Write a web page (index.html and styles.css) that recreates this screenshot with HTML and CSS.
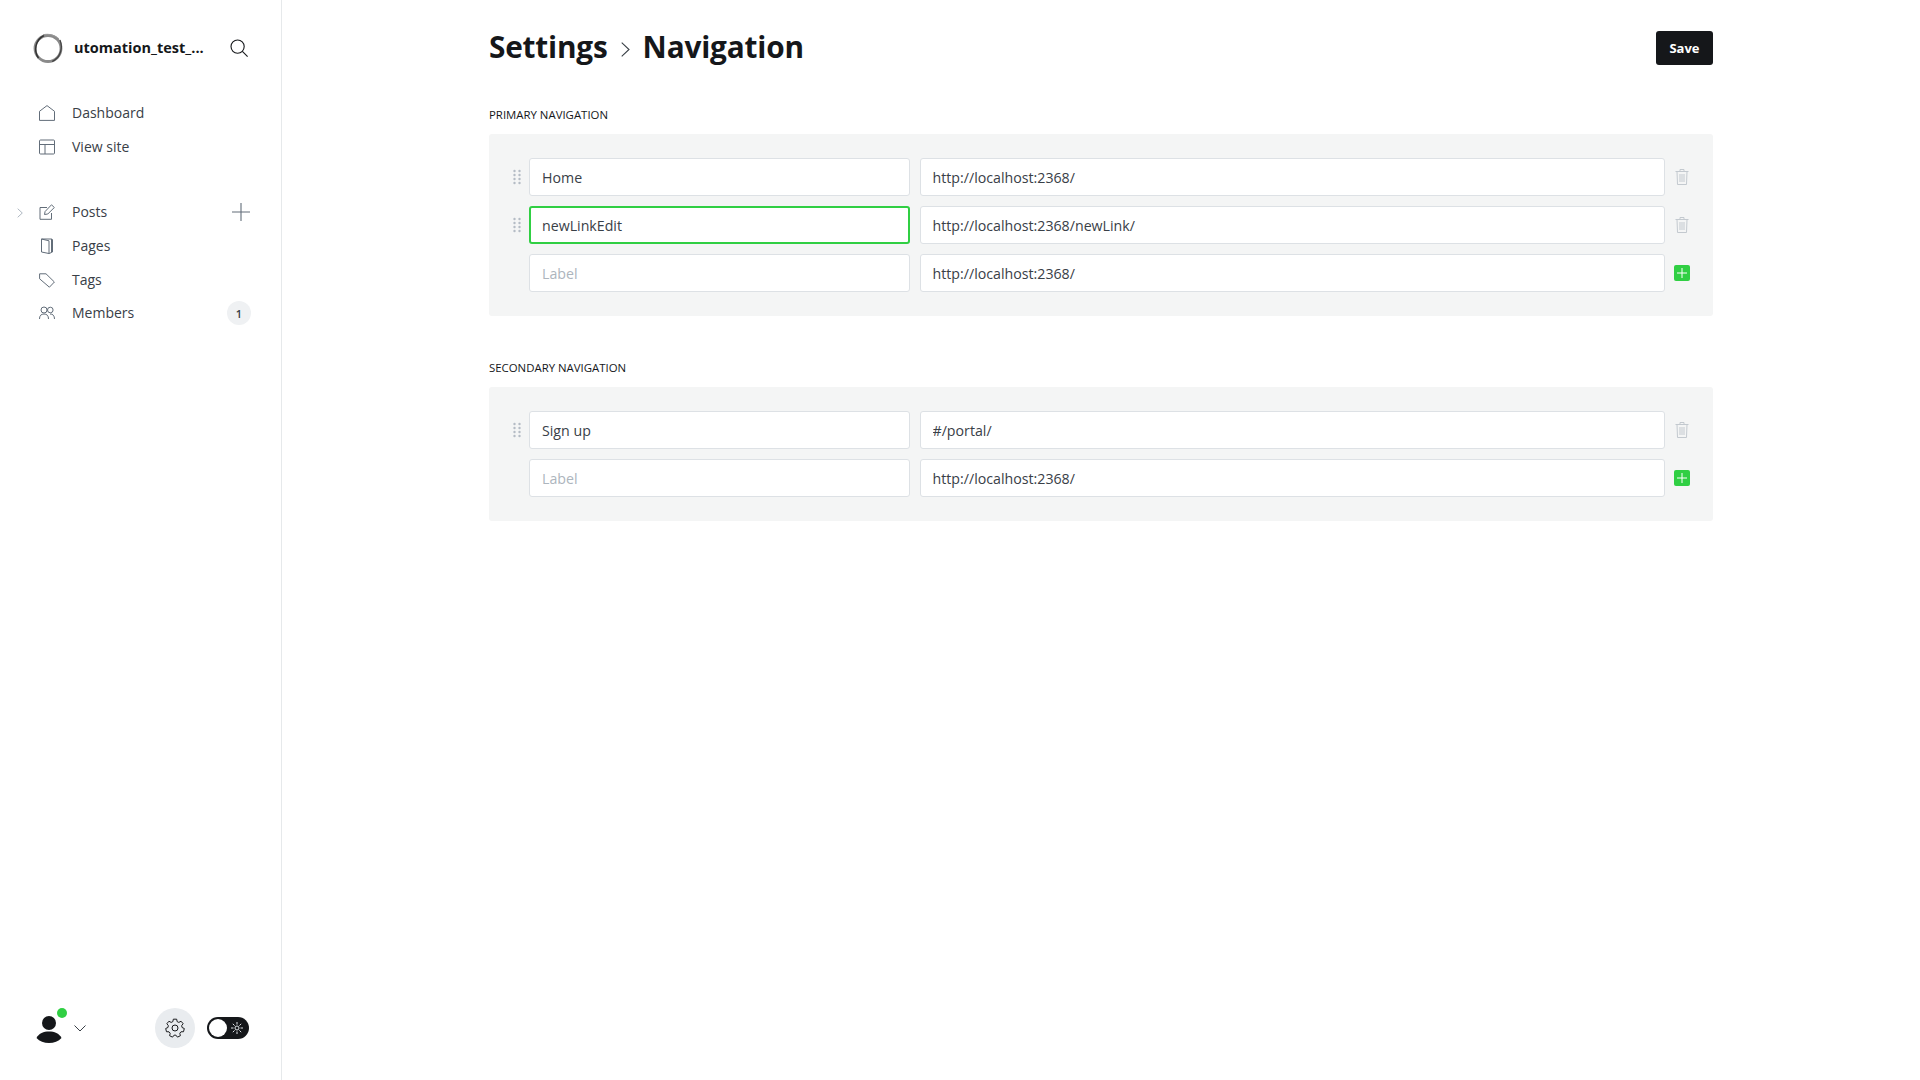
FILE: index.html
```html
<!DOCTYPE html>
<html lang="en">
<head>
<meta charset="utf-8">
<title>Settings - Navigation</title>
<link rel="stylesheet" href="styles.css">
</head>
<body>
<div class="app">
  <aside class="sidebar">
    <div class="brand">
      <svg class="logo" viewBox="0 0 30 30" width="30" height="30"><circle cx="15" cy="15.500" r="13" fill="none" stroke="#8a8a8a" stroke-width="2.800"/><path d="M5.500 25C.5 18 2 7 11 2.500" fill="none" stroke="#333" stroke-width="1.500"/><path d="M27 7c3 7 1 18-8 21.500" fill="none" stroke="#444" stroke-width="1.300"/><path d="M10 1.800c6-1.500 12 .5 16 4" fill="none" stroke="#999" stroke-width="1"/></svg>
      <span class="brand-name">utomation_test_...</span>
      <svg class="search" viewBox="0 0 18 18" width="18" height="18"><circle cx="7.600" cy="7.600" r="6.600"/><path d="M12.400 12.400 17.600 17.600"/></svg>
    </div>
    <nav class="nav nav-top">
      <a class="nav-item"><svg class="ico" viewBox="0 0 16 16"><path d="M.5 6.300 8 .6l7.500 5.700v9.100H.5z"/></svg><span>Dashboard</span></a>
      <a class="nav-item"><svg class="ico" viewBox="0 0 16 16"><rect x=".5" y="1" width="15" height="14" rx="1"/><path d="M.5 5.500h15M6 5.500V15"/></svg><span>View site</span></a>
    </nav>
    <nav class="nav nav-content">
      <a class="nav-item">
        <svg class="caret" viewBox="0 0 6 10" width="6" height="10"><path d="M.7.700 5.300 5 .7 9.300"/></svg>
        <svg class="ico" viewBox="0 0 16 16"><path d="M8 3.500H1v11.800h11.500V9"/><path d="M5.500 10.500l.6-3L12.500.8 15.300 3.500 8.800 10z"/></svg><span>Posts</span>
        <svg class="plus" viewBox="0 0 18 18" width="18" height="18"><path d="M9 0v18M0 9h18"/></svg>
      </a>
      <a class="nav-item"><svg class="ico" viewBox="0 0 16 16"><path d="M2.500 1h10v13.500l-2.500 1-7.500-1.500zM2.500 1 10 2.800v12.700M12.500 1l1 .5v12.500l-1 .5"/></svg><span>Pages</span></a>
      <a class="nav-item"><svg class="ico" viewBox="0 0 16 16"><path d="M.6 1.800h6.400L15.400 10l-5 5.200L.6 6.800z"/></svg><span>Tags</span></a>
      <a class="nav-item"><svg class="ico" viewBox="0 0 16 16"><circle cx="5" cy="5" r="3"/><circle cx="11.300" cy="5" r="2.800"/><path d="M.5 14c0-3.500 1.700-5 4.500-5s4.500 1.500 4.500 5M11 9c2.800-.3 4.500 1.800 4.500 5"/></svg><span>Members</span><b class="badge">1</b></a>
    </nav>
    <div class="side-foot">
      <div class="avatar">
        <svg viewBox="0 0 34 34" width="34" height="34"><circle cx="17" cy="12" r="7"/><path d="M4.500 27c2.500-5 7-6.500 12.500-6.500S27 22 29.500 27c-3 3.500-7.500 5-12.500 5s-9.500-1.500-12.500-5z"/></svg>
        <i class="dot"></i>
      </div>
      <svg class="chev" viewBox="0 0 12 7" width="12" height="7"><path d="M.5.500 6 6 11.500.500"/></svg>
      <div class="foot-right">
        <span class="gear"><svg viewBox="0 0 20 20" width="20" height="20"><path d="M8.300 1h3.400l.5 2.500 1.700.8 2.300-1.200 2.100 2.500-1.500 2 .4 1.900 2.300 1-.8 3.300-2.600.1-1.200 1.500.6 2.500-3 1.400-1.600-2h-1.800l-1.600 2-3-1.400.6-2.500-1.200-1.500-2.600-.1-.8-3.300 2.300-1 .4-1.900-1.500-2 2.100-2.500 2.300 1.200 1.700-.8z" transform="translate(.2 .2) scale(.98)"/><circle cx="10" cy="10" r="3"/></svg></span>
        <span class="toggle"><i class="knob"></i><svg class="sun" viewBox="0 0 12 12" width="12" height="12"><circle cx="6" cy="6" r="2"/><path d="M6 0v2.500M6 9.500V12M0 6h2.500M9.500 6H12M1.800 1.800l1.800 1.800M8.400 8.400l1.800 1.800M1.800 10.200l1.800-1.800M8.400 3.600l1.800-1.800"/></svg></span>
      </div>
    </div>
  </aside>
  <main class="main">
    <div class="content">
      <header class="head">
        <h1>Settings<svg class="crumb" viewBox="0 0 9 15" width="9" height="15"><path d="M.7.700 8 7.500.7 14.300"/></svg>Navigation</h1>
        <button class="save">Save</button>
      </header>
      <section class="block">
        <h2>Primary navigation</h2>
        <div class="panel">
          <div class="row">
            <svg class="grip" viewBox="0 0 9 16" width="9" height="16"><use href="#g"/></svg>
            <input class="in label" value="Home"><input class="in url" value="http://localhost:2368/">
            <svg class="trash" viewBox="0 0 14 16" width="14" height="16"><use href="#t"/></svg>
          </div>
          <div class="row">
            <svg class="grip" viewBox="0 0 9 16" width="9" height="16"><use href="#g"/></svg>
            <input class="in label focus" value="newLinkEdit"><input class="in url" value="http://localhost:2368/newLink/">
            <svg class="trash" viewBox="0 0 14 16" width="14" height="16"><use href="#t"/></svg>
          </div>
          <div class="row">
            <span class="grip-space"></span>
            <input class="in label" placeholder="Label"><input class="in url" value="http://localhost:2368/">
            <span class="add"><svg viewBox="0 0 10 10" width="10" height="10"><path d="M5 0v10M0 5h10"/></svg></span>
          </div>
        </div>
      </section>
      <section class="block block-2">
        <h2>Secondary navigation</h2>
        <div class="panel">
          <div class="row">
            <svg class="grip" viewBox="0 0 9 16" width="9" height="16"><use href="#g"/></svg>
            <input class="in label" value="Sign up"><input class="in url" value="#/portal/">
            <svg class="trash" viewBox="0 0 14 16" width="14" height="16"><use href="#t"/></svg>
          </div>
          <div class="row">
            <span class="grip-space"></span>
            <input class="in label" placeholder="Label"><input class="in url" value="http://localhost:2368/">
            <span class="add"><svg viewBox="0 0 10 10" width="10" height="10"><path d="M5 0v10M0 5h10"/></svg></span>
          </div>
        </div>
      </section>
    </div>
  </main>
</div>
<svg class="defs" width="0" height="0">
  <defs>
    <g id="g"><circle cx="1.500" cy="2" r="1.200"/><circle cx="6.500" cy="2" r="1.200"/><circle cx="1.500" cy="6" r="1.200"/><circle cx="6.500" cy="6" r="1.200"/><circle cx="1.500" cy="10" r="1.200"/><circle cx="6.500" cy="10" r="1.200"/><circle cx="1.500" cy="14" r="1.200"/><circle cx="6.500" cy="14" r="1.200"/></g>
    <g id="t"><path d="M.5 2.500h13M5 2.500V.5h4v2M2 2.500l.5 13h9l.5-13M5 5v8M7 5v8M9 5v8"/></g>
  </defs>
</svg>
</body>
</html>
```
FILE: styles.css
```css
* { box-sizing: border-box; }
html, body { margin: 0; height: 100%; }
body { font-family: "Open Sans", "Noto Sans", "Liberation Sans", sans-serif; color: #15171a; background: #fff; }
.app { display: flex; height: 100vh; }
.sidebar { width: 282px; flex: none; border-right: 1px solid #e6e9eb; display: flex; flex-direction: column; padding: 33px 30px 32px 0; }
.brand { display: flex; align-items: center; height: 30px; padding-left: 33px; }
.logo { flex: none; }
.brand-name { margin-left: 11px; margin-top: -2px; font-size: 14.500px; font-weight: 700; color: #15171a; white-space: nowrap; }
.search { margin-left: auto; margin-right: 3px; fill: none; stroke: #15171a; stroke-width: 1.100; }
.nav { display: flex; flex-direction: column; }
.nav-top { margin-top: 33.400px; }
.nav-content { margin-top: 32px; }
.nav-item { position: relative; display: flex; align-items: center; height: 33.600px; padding-left: 39px; font-size: 14px; color: #394047; }
.nav-item span { margin-top: -1px; }
.ico { width: 16px; height: 16px; flex: none; margin-right: 17px; fill: none; stroke: #626d79; stroke-width: 1; }
.caret { position: absolute; left: 17px; top: 12px; fill: none; stroke: #aeb7c1; stroke-width: 1; }
.plus { margin-left: auto; margin-right: 1px; fill: none; stroke: #626d79; stroke-width: 1.100; }
.badge { margin-left: auto; width: 24px; height: 24px; border-radius: 50%; background: #eff1f3; color: #394047; font-size: 11px; font-weight: 600; display: flex; align-items: center; justify-content: center; }
.side-foot { margin-top: auto; display: flex; align-items: center; height: 40px; padding-left: 32px; padding-right: 2px; }
.avatar { position: relative; width: 34px; height: 34px; }
.avatar svg { display: block; fill: #15171a; }
.dot { position: absolute; top: -3px; right: -1px; width: 10px; height: 10px; border-radius: 50%; background: #30cf43; }
.chev { margin-left: 8px; fill: none; stroke: #394047; stroke-width: 1; }
.foot-right { margin-left: auto; display: flex; align-items: center; gap: 12px; }
.gear { width: 40px; height: 40px; border-radius: 50%; background: #e9ecef; display: flex; align-items: center; justify-content: center; }
.gear svg { fill: none; stroke: #15171a; stroke-width: 1; }
.toggle { position: relative; width: 42px; height: 22px; border-radius: 11px; background: #15171a; display: flex; align-items: center; justify-content: flex-end; padding-right: 6px; }
.knob { position: absolute; left: 2px; top: 2px; width: 18px; height: 18px; border-radius: 50%; background: #fff; }
.sun { fill: none; stroke: #dfe3e6; stroke-width: 1; }
.main { flex: 1; min-width: 0; padding: 0 207px 0 207px; }
.content { width: 1224px; }
.head { display: flex; align-items: center; justify-content: space-between; padding-top: 31px; height: 65px; }
h1 { margin: -2px 0 0; font-size: 29.800px; font-weight: 700; line-height: 34px; letter-spacing: -.2px; display: flex; align-items: center; white-space: nowrap; }
.crumb { margin: 4px 13px 0 13px; fill: none; stroke: #394047; stroke-width: 1.100; }
.save { width: 57px; height: 34px; border: 0; border-radius: 3px; background: #15171a; color: #fff; font: 700 13px "Open Sans", "Noto Sans", sans-serif; padding: 0; }
.block { margin-top: 42px; }
.block-2 { margin-top: 43.500px; }
h2 { margin: 0 0 11px; font-size: 11.400px; line-height: 16px; font-weight: 400; color: #15171a; text-transform: uppercase; }
.block-2 h2 { margin-bottom: 11.500px; }
.panel { background: #f4f5f5; border-radius: 3px; padding: 24px 0 24px; display: flex; flex-direction: column; gap: 10px; }
.row { display: flex; align-items: center; height: 38px; }
.grip, .grip-space { flex: none; width: 9px; height: 16px; margin-left: 24px; margin-right: 7px; }
.grip { fill: #b4bcc5; }
.in { height: 38px; border: 1px solid #dde1e5; border-radius: 3px; background: #fff; padding: 0 12px; font: 400 14.200px "Open Sans", "Noto Sans", sans-serif; color: #394047; outline: 0; }
.in::placeholder { color: #adb5bd; opacity: 1; }
.label { width: 381px; margin-right: 10px; }
.url { width: 745px; margin-right: 9px; padding-left: 11.500px; }
.focus { border: 2px solid #30cf43; padding: 0 11px; }
.trash { margin-left: 1px; fill: none; stroke: #c3c9cf; stroke-width: 1; }
.add { width: 16px; height: 16px; border-radius: 2px; background: #30cf43; display: flex; align-items: center; justify-content: center; }
.add svg { fill: none; stroke: #fff; stroke-width: 1; }
.defs { position: absolute; }
```
